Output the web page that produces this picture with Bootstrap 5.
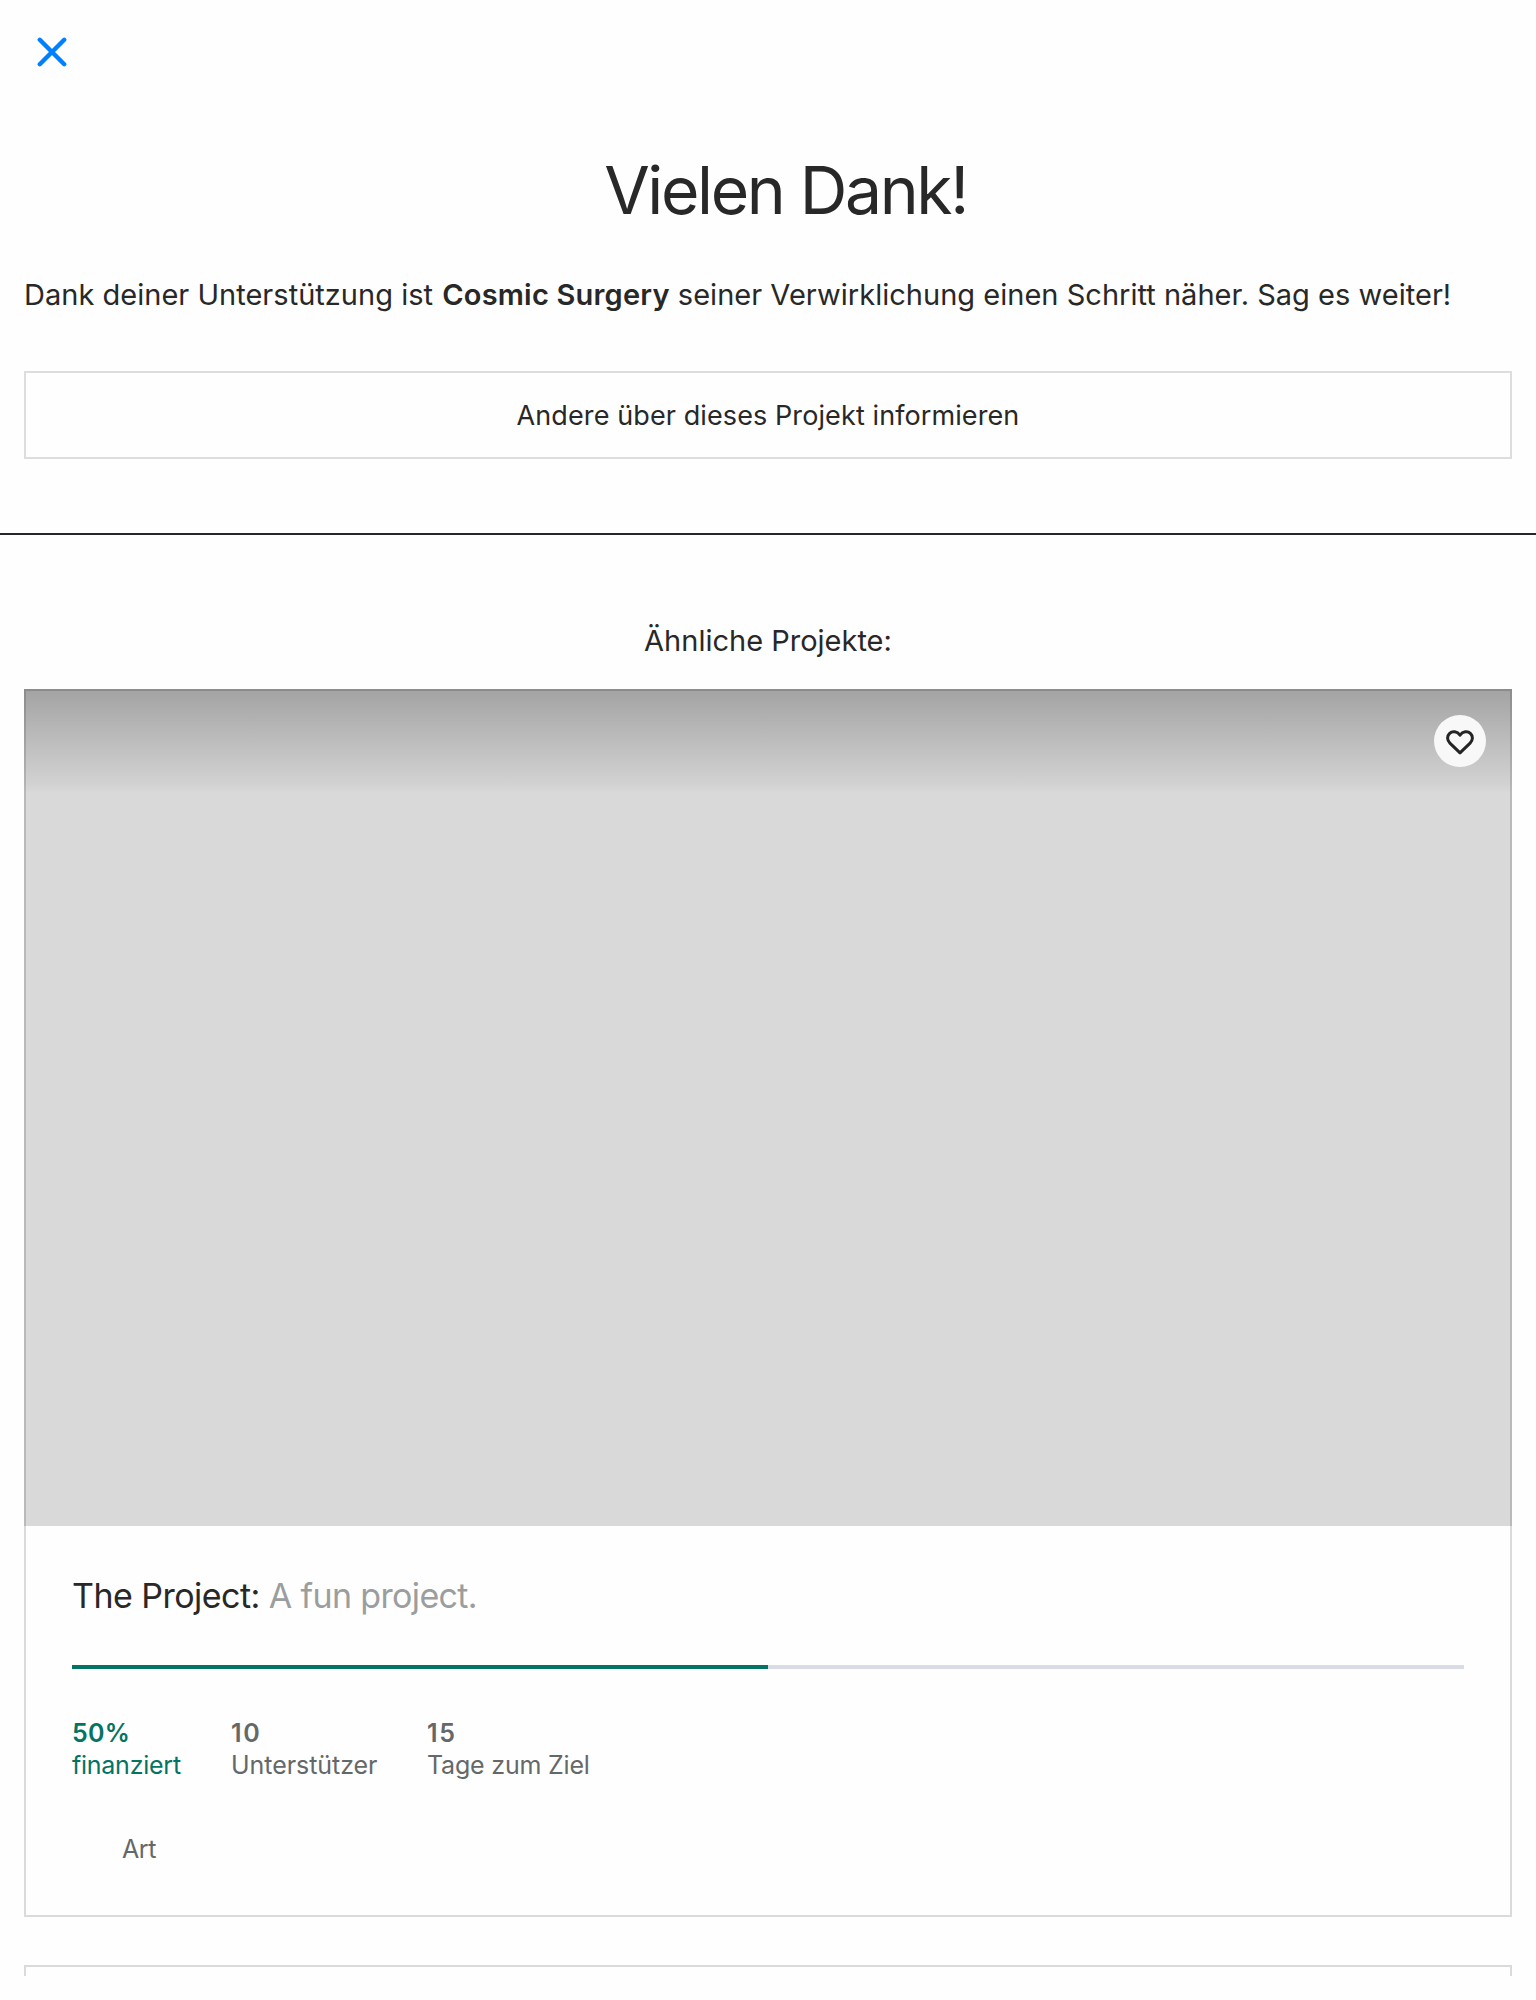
<!DOCTYPE html>
<html lang="de">
<head>
<meta charset="utf-8">
<meta name="viewport" content="width=device-width, initial-scale=1">
<title>Vielen Dank!</title>
<link href="https://cdn.jsdelivr.net/npm/bootstrap@5.3.0/dist/css/bootstrap.min.css" rel="stylesheet">
<style>
  body { font-family: Inter, "Liberation Sans", sans-serif; color: #282828; background: #fefefe; }
  .screen { height: 1976px; overflow: hidden; }
  .topbar { height: 150px; padding: 37px; }
  .close-btn { width: 30px; height: 30px; }
  .thanks { font-size: 66px; line-height: 80px; letter-spacing: -2.35px; padding-left: 35px; }
  .message { font-size: 29px; line-height: 35px; letter-spacing: .02px; margin: 47px 0 59px; padding-left: 24px; }
  .message strong { font-weight: 600; letter-spacing: .2px; margin-left: 1px; }
  .gutter { margin-left: 24px; margin-right: 24px; }
  .share-btn { height: 88px; border: 2px solid #dcdddd; font-size: 27px; letter-spacing: .1px; color: #282828; padding: 2px 0 0; }
  .divider { height: 2px; background: #25272a; margin-top: 74px; }
  .related { font-size: 29px; line-height: 35px; letter-spacing: 0; margin: 88px 0 31px; }
  .project { height: 1228px; margin-bottom: 48px; }
  .project::after { content: ""; position: absolute; inset: 0; border: 2px solid rgba(0,0,0,.14); pointer-events: none; }
  .photo { height: 837px; background: linear-gradient(rgba(0,0,0,.25), rgba(0,0,0,.03) 96px, transparent 104px) #d9d9d9; padding: 26px; }
  .heart { width: 52px; height: 52px; background: #f8f8f8; }
  .details { padding: 50px 48px 0; }
  .headline { font-size: 34px; line-height: 40px; letter-spacing: -.53px; }
  .headline span { color: #9b9e9e; letter-spacing: -.65px; }
  .funding { height: 4px; margin: 49px 0 48px; background: #d9dce5; }
  .funding .progress-bar { background: #037362; }
  .stats { font-size: 25px; line-height: 32px; color: #656868; }
  .stats b { font-weight: 600; display: block; letter-spacing: .3px; }
  .stats .backers b, .stats .days b { letter-spacing: 1.6px; }
  .funded { color: #037362; width: 159px; letter-spacing: -.25px; }
  .backers { width: 196px; letter-spacing: -.05px; }
  .days { letter-spacing: -.2px; }
  .category { font-size: 25px; line-height: 32px; color: #656868; margin-top: 52px; padding-left: 50px; letter-spacing: -.4px; }
</style>
<script src="https://cdn.jsdelivr.net/npm/bootstrap@5.3.0/dist/js/bootstrap.bundle.min.js"></script>
</head>
<body>
<div class="screen">
  <header class="topbar">
    <button class="btn close-btn p-0 border-0 d-block" aria-label="Schließen">
      <svg class="d-block" width="30" height="30" viewBox="0 0 30 30" fill="none" stroke="#007fff" stroke-width="4.4" stroke-linecap="round"><path d="M2.8 2.8 27.2 27.2M27.2 2.8 2.8 27.2"/></svg>
    </button>
  </header>
  <h1 class="thanks fw-normal text-center mb-0">Vielen Dank!</h1>
  <p class="message">Dank deiner Unterstützung ist <strong>Cosmic Surgery</strong> seiner Verwirklichung einen Schritt näher. Sag es weiter!</p>
  <div class="gutter d-grid">
    <button class="btn share-btn rounded-0">Andere über dieses Projekt informieren</button>
  </div>
  <div class="divider"></div>
  <h2 class="related fw-normal text-center">Ähnliche Projekte:</h2>
  <article class="card project gutter border-0 rounded-0 bg-transparent">
    <div class="photo d-flex justify-content-end align-items-start">
      <button class="btn heart rounded-circle border-0 p-0 d-flex align-items-center justify-content-center" aria-label="Merken">
        <svg width="28" height="27" viewBox="0 -2 28 27" fill="none" stroke="#242424" stroke-width="3" stroke-linejoin="round"><path d="M14 22.8 3.9 13.2C1 10.4.9 6 3.4 3.6 6.3.8 11.2 1.2 14 5.2 16.8 1.2 21.7.8 24.6 3.6 27.1 6 27 10.4 24.1 13.2Z"/></svg>
      </button>
    </div>
    <div class="details">
      <h3 class="headline fw-normal mb-0">The Project: <span>A fun project.</span></h3>
      <div class="progress funding rounded-0"><div class="progress-bar" style="width:50%"></div></div>
      <div class="stats d-flex">
        <div class="funded"><b>50%</b>finanziert</div>
        <div class="backers"><b>10</b>Unterstützer</div>
        <div class="days"><b>15</b>Tage zum Ziel</div>
      </div>
      <div class="category">Art</div>
    </div>
  </article>
  <article class="card project gutter border-0 rounded-0 bg-transparent"></article>
</div>
</body>
</html>
